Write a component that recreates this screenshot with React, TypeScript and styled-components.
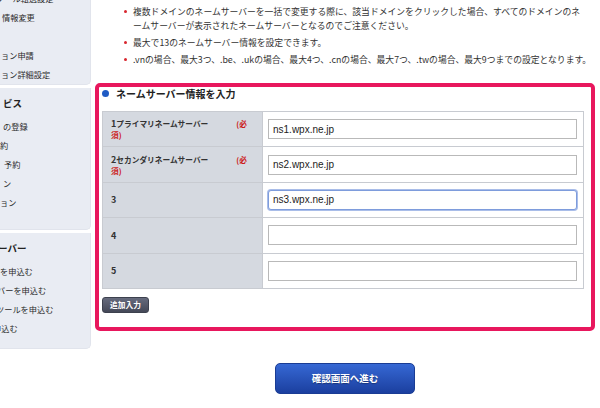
import React, { useEffect, useRef } from "react";
import styled, { createGlobalStyle, css } from "styled-components";

const Global = createGlobalStyle`
  html, body { margin: 0; padding: 0; background: #fff; overflow: hidden; }
  body { font-family: "Noto Sans CJK JP", "Liberation Sans", sans-serif; color: #333; }
  * { box-sizing: border-box; }
`;

const Page = styled.div`
  display: flex;
  align-items: flex-start;
  width: 600px;
  height: 408px;
  overflow: hidden;
`;

const Sidebar = styled.nav`
  width: 91px;
  flex-shrink: 0;
  display: flex;
  flex-direction: column;
  gap: 3px;
  margin-top: -14px;
`;

const Panel = styled.div<{ $pt: number; $pb: number }>`
  background: #e9ecf3;
  border-right: 1px solid #e1e4ec;
  border-bottom: 1px solid #e1e4ec;
  border-radius: 0 0 5px 0;
  padding: ${(p) => p.$pt}px 0 ${(p) => p.$pb}px;
  overflow: hidden;
`;

const SideHeading = styled.div<{ $indent: number }>`
  font-size: 9.5px;
  font-weight: bold;
  line-height: 19px;
  color: #222;
  white-space: nowrap;
  margin: 0 0 4px ${(p) => p.$indent}px;
`;

const SideItem = styled.div<{ $indent: number }>`
  font-size: 8.2px;
  line-height: 19px;
  color: #2b2b2b;
  white-space: nowrap;
  margin-left: ${(p) => p.$indent}px;
`;

const Main = styled.main`
  flex: 1;
  display: flex;
  flex-direction: column;
  padding: 0 5px 0 4px;
`;

const Notes = styled.ul`
  list-style: none;
  margin: 5px 0 0;
  padding: 0 0 0 38px;
  font-size: 8.8px;
  line-height: 14px;
  color: #333;
`;

const Note = styled.li`
  position: relative;
  margin-bottom: 3px;
  white-space: nowrap;
  &:last-child { margin-bottom: 0; }
  &::before {
    content: "";
    position: absolute;
    left: -9px;
    top: 5px;
    width: 3px;
    height: 3px;
    border-radius: 50%;
    background: #d8262e;
  }
`;

const Frame = styled.section`
  margin-top: 16px;
  border: 4px solid #e8175d;
  border-radius: 5px;
  padding: 0 7px 14px 3px;
`;

const SectionTitle = styled.h2`
  display: flex;
  align-items: center;
  gap: 7px;
  height: 13px;
  margin: 0 0 11px;
  font-size: 10px;
  font-weight: bold;
  color: #222;
`;

const Dot = styled.span`
  width: 7px;
  height: 7px;
  border-radius: 50%;
  background: #1f5bc4;
`;

const Table = styled.table`
  width: 482px;
  border-collapse: collapse;
  table-layout: fixed;
`;

const Row = styled.tr`
  height: 35.4px;
`;

const LabelCell = styled.th`
  width: 160px;
  background: #d5d9e0;
  border: 1px solid #c8cbd1;
  padding: 0 8px;
  text-align: left;
  font-size: 7.7px;
  font-weight: bold;
  line-height: 11px;
  color: #333;
`;

const Num = styled.span`
  font-size: 9px;
`;

const ValueCell = styled.td`
  background: #fff;
  border: 1px solid #c8cbd1;
  padding: 0 6px 0 5px;
`;

const Required = styled.span`
  color: #cc1a1a;
  margin-left: 28px;
`;

const Input = styled.input<{ $focused?: boolean }>`
  display: block;
  width: 100%;
  height: 20px;
  border: 1px solid #b9b9b9;
  padding: 0 4px;
  font-family: "Liberation Sans", Arial, sans-serif;
  font-size: 10px;
  color: #222;
  background: #fff;
  outline: none;
  ${(p) =>
    p.$focused &&
    css`
      border-color: #7e9cdc;
      border-radius: 3px;
      box-shadow: 0 0 0 1px #a9bde9;
    `}
`;

const AddButton = styled.button`
  margin-top: 8px;
  width: 47px;
  height: 16px;
  padding: 0;
  border: 1px solid #3d414e;
  border-radius: 3px;
  background: linear-gradient(#666b7d, #444857);
  color: #fff;
  font-family: "Noto Sans CJK JP", sans-serif;
  font-size: 7.7px;
  font-weight: bold;
  display: block;
`;

const Confirm = styled.button`
  align-self: center;
  margin-top: 32px;
  width: 140px;
  height: 31px;
  border: 1px solid #1a3c94;
  border-radius: 5px;
  background: linear-gradient(#3668d4, #1b3f9f);
  color: #fff;
  font-family: "Noto Sans CJK JP", sans-serif;
  font-size: 9.5px;
  font-weight: bold;
  text-shadow: 0 1px 1px rgba(0, 0, 0, 0.3);
`;

const rows = [
  { num: "1", label: "プライマリネームサーバー", req: true, value: "ns1.wpx.ne.jp" },
  { num: "2", label: "セカンダリネームサーバー", req: true, value: "ns2.wpx.ne.jp" },
  { num: "3", label: "", req: false, value: "ns3.wpx.ne.jp", focused: true },
  { num: "4", label: "", req: false, value: "" },
  { num: "5", label: "", req: false, value: "" },
];

export default function App() {
  const ref = useRef<HTMLInputElement>(null);
  useEffect(() => {
    const el = ref.current;
    if (el) {
      el.focus();
      el.setSelectionRange(3, 3);
    }
  }, []);

  return (
    <>
      <Global />
      <Page>
        <Sidebar>
          <Panel $pt={2.5} $pb={0}>
            <SideItem $indent={-4}>ソール転送設定</SideItem>
            <SideItem $indent={2}>情報変更</SideItem>
            <SideItem $indent={2}>&nbsp;</SideItem>
            <SideItem $indent={1}>ョン申請</SideItem>
            <SideItem $indent={1}>ョン詳細設定</SideItem>
          </Panel>
          <Panel $pt={6.5} $pb={17}>
            <SideHeading $indent={3}>ビス</SideHeading>
            <SideItem $indent={3}>の登録</SideItem>
            <SideItem $indent={0}>約</SideItem>
            <SideItem $indent={4}>予約</SideItem>
            <SideItem $indent={3}>ン</SideItem>
            <SideItem $indent={0}>ョン</SideItem>
          </Panel>
          <Panel $pt={5.5} $pb={10.5}>
            <SideHeading $indent={-2}>ーバー</SideHeading>
            <SideItem $indent={0}>を申込む</SideItem>
            <SideItem $indent={-3}>バーを申込む</SideItem>
            <SideItem $indent={-4}>ツールを申込む</SideItem>
            <SideItem $indent={-7}>申込む</SideItem>
          </Panel>
        </Sidebar>

        <Main>
          <Notes>
            <Note>
              複数ドメインのネームサーバーを一括で変更する際に、該当ドメインをクリックした場合、すべてのドメインのネ
              <br />
              ームサーバーが表示されたネームサーバーとなるのでご注意ください。
            </Note>
            <Note>最大で13のネームサーバー情報を設定できます。</Note>
            <Note>
              .vnの場合、最大3つ、.be、.ukの場合、最大4つ、.cnの場合、最大7つ、.twの場合、最大9つまでの設定となります。
            </Note>
          </Notes>

          <Frame>
            <SectionTitle>
              <Dot />
              ネームサーバー情報を入力
            </SectionTitle>
            <Table>
              <tbody>
                {rows.map((r) => (
                  <Row key={r.num}>
                    <LabelCell>
                      <Num>{r.num}</Num>
                      {r.label}
                      {r.req && (
                        <Required>
                          (必
                          <br />
                          須)
                        </Required>
                      )}
                    </LabelCell>
                    <ValueCell>
                      <Input
                        ref={r.focused ? ref : undefined}
                        $focused={r.focused}
                        defaultValue={r.value}
                        autoFocus={r.focused}
                      />
                    </ValueCell>
                  </Row>
                ))}
              </tbody>
            </Table>
            <AddButton type="button">追加入力</AddButton>
          </Frame>

          <Confirm type="button">確認画面へ進む</Confirm>
        </Main>
      </Page>
    </>
  );
}
